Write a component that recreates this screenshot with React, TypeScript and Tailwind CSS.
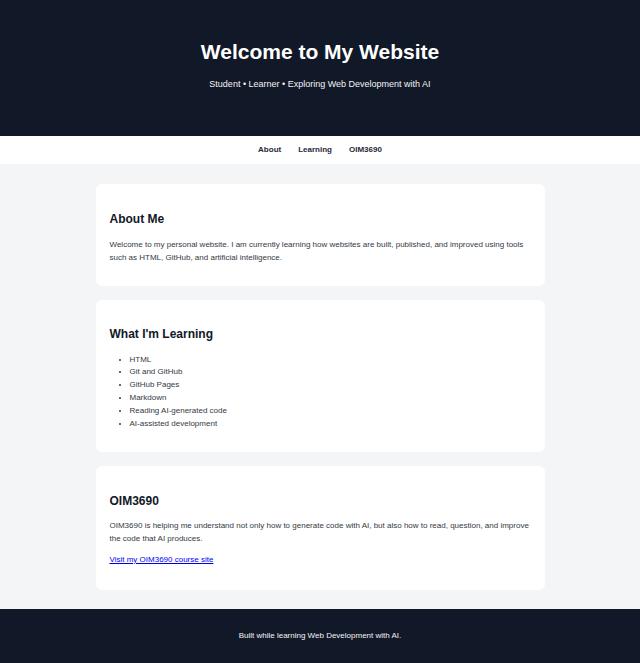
import React from "react";

export default function App() {
  return (
    <div className="min-h-[663px] flex flex-col bg-[#f4f5f7] text-[#333a45]" style={{ fontFamily: '"Liberation Sans", Arial, sans-serif' }}>
      <header className="bg-[#111827] text-white text-center pt-[40px] pb-[46px]">
        <h1 className="text-[21px] font-bold leading-[24px]">Welcome to My Website</h1>
        <p className="mt-[14px] text-[9px] leading-[12px] text-[#f3f4f6]">Student • Learner • Exploring Web Development with AI</p>
      </header>
      <nav className="bg-white h-[28px] flex items-center justify-center gap-[17px] text-[8px] font-bold text-[#1f2937]">
        <a>About</a>
        <a>Learning</a>
        <a>OIM3690</a>
      </nav>
      <main className="flex-1 flex flex-col items-center gap-[14px] pt-[20px] pb-[19px]">
        <section className="w-[449px] bg-white rounded-[6px] px-[14px] pt-[14px] pb-[12px]">
          <h2 className="mt-[14px] mb-[13px] text-[12px] leading-[14px] font-bold text-[#111827]">About Me</h2>
          <p className="text-[8px] leading-[1.6] mb-[9px]">Welcome to my personal website. I am currently learning how websites are built, published, and improved using tools such as HTML, GitHub, and artificial intelligence.</p>
        </section>
        <section className="w-[449px] bg-white rounded-[6px] px-[14px] pt-[14px] pb-[13px]">
          <h2 className="mt-[13px] mb-[13px] text-[12px] leading-[14px] font-bold text-[#111827]">What I'm Learning</h2>
          <ul className="list-disc pl-[20px] text-[8px] leading-[1.6] mb-[9px]">
            <li>HTML</li>
            <li>Git and GitHub</li>
            <li>GitHub Pages</li>
            <li>Markdown</li>
            <li>Reading AI-generated code</li>
            <li>AI-assisted development</li>
          </ul>
        </section>
        <section className="w-[449px] bg-white rounded-[6px] px-[14px] pt-[14px] pb-[14px]">
          <h2 className="mt-[14px] mb-[12px] text-[12px] leading-[14px] font-bold text-[#111827]">OIM3690</h2>
          <p className="text-[8px] leading-[1.6] mb-[8px]">OIM3690 is helping me understand not only how to generate code with AI, but also how to read, question, and improve the code that AI produces.</p>
          <p className="text-[8px] leading-[1.6] mb-[9px]"><a href="#" className="text-[#0000ee] underline">Visit my OIM3690 course site</a></p>
        </section>
      </main>
      <footer className="bg-[#111827] text-[#f3f4f6] text-center text-[8px] leading-[12px] py-[21px]">
        Built while learning Web Development with AI.
      </footer>
    </div>
  );
}
